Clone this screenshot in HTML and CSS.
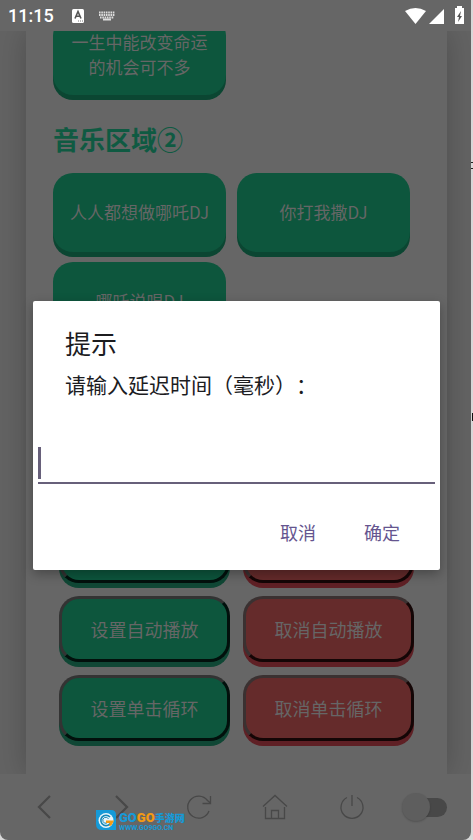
FILE: index.html
```html
<!DOCTYPE html>
<html lang="zh-CN">
<head>
<meta charset="utf-8">
<meta name="viewport" content="width=device-width, initial-scale=1">
<title>提示</title>
<link rel="stylesheet" href="styles.css">
</head>
<body>
<div class="app">
  <header class="status">
    <span class="clock">11:15</span>
    <svg class="ime" width="12" height="14" viewBox="0 0 12 14"><rect width="12" height="14" rx="1.5" fill="#fff"/><path d="M3 9.500 6 2.500 9 9.500M4 7.300h4" fill="none" stroke="#555" stroke-width="1.600"/><path d="M6 12h1m1 0h1m1 0h1" stroke="#777"/></svg>
    <svg class="keys" width="16" height="10" viewBox="0 0 16 10"><path d="M0 1.500h16M0 4h16M1 6.500h14" stroke="#ddd" stroke-width="1.800" stroke-dasharray="1.600 .7" fill="none"/><path d="M4 8.500h8" stroke="#ddd" stroke-width="2"/></svg>
    <svg class="signals" width="60" height="18" viewBox="0 0 60 18" fill="#fff"><path d="M1 4Q11.500-2 22 4L11.500 17z"/><path d="M25 17 40 2v15z"/><path d="M51 1h2V-1h5v2h2v16h-9V2z" /><path d="m57 4-4 6h2l-1 5 4-6h-2z" fill="#555"/></svg>
  </header>

  <main class="page">
    <div class="card">
      <section class="songs songs-first">
        <button class="song">一生中能改变命运的机会可不多</button>
      </section>
      <h2>音乐区域②</h2>
      <section class="songs">
        <button class="song">人人都想做哪吒DJ</button>
        <button class="song">你打我撒DJ</button>
        <button class="song">哪吒说唱DJ</button>
      </section>
      <section class="controls">
        <button class="control"></button>
        <button class="control cancel"></button>
        <button class="control">设置自动播放</button>
        <button class="control cancel">取消自动播放</button>
        <button class="control">设置单击循环</button>
        <button class="control cancel">取消单击循环</button>
      </section>
    </div>
  </main>

  <nav class="toolbar">
    <button aria-label="后退"><svg width="28" height="28" viewBox="0 0 28 28"><path d="M19 3 8 14l11 11" stroke-width="2.200"/></svg></button>
    <button aria-label="前进"><svg width="28" height="28" viewBox="0 0 28 28"><path d="m8 3 11 11L8 25" stroke-width="2.200"/></svg></button>
    <button aria-label="刷新"><svg width="28" height="28" viewBox="0 0 28 28"><path d="M24 18A11 11 0 1 1 22.500 7.500L25.500 10M25.500 3v7.500h-8"/></svg></button>
    <button aria-label="主页"><svg width="28" height="28" viewBox="0 0 28 28"><path d="M2 13.500 14 2.500l12 11M4.500 14v11.500h19V14M10.500 25.500v-8h7v8"/></svg></button>
    <button aria-label="关闭"><svg width="28" height="28" viewBox="0 0 28 28"><path d="M9 4.500A11 11 0 1 0 19 4.500M14 2v11"/></svg></button>
    <span><input class="toggle" type="checkbox" aria-label="开关"></span>
  </nav>

  <div class="overlay">
    <form class="dialog" role="dialog" aria-labelledby="title">
      <h1 id="title">提示</h1>
      <label for="delay">请输入延迟时间（毫秒）：</label>
      <input id="delay" type="text" inputmode="numeric">
      <div class="actions">
        <button type="button">取消</button>
        <button type="button">确定</button>
      </div>
    </form>
  </div>

  <div class="brand">
    <svg width="22" height="21" viewBox="0 0 22 21"><path d="M1 0h15q5 0 5 5v15H7Q1 20 1 14z" fill="#159ad8"/><circle cx="11" cy="10.500" r="7.500" fill="#e8f5fa"/><path d="M15 7A5.200 5.200 0 1 0 16 12h-5" fill="none" stroke="#1688b8" stroke-width="1.600"/><path d="M13.500 9A3 3 0 1 0 12 13" fill="none" stroke="#1688b8"/><path d="M11 10.500h8l-2 4q-1 1.500-3 1.500l1-3h-4z" fill="#f49a12"/></svg>
    <div class="brand-text">
      <div class="brand-name"><b>GO</b><b class="gold">GO</b><span>手游网</span></div>
      <small>WWW.GO9GO.CN</small>
    </div>
  </div>
</div>
</body>
</html>
```
FILE: styles.css
```css
* { box-sizing: border-box; }

body {
  margin: 0;
  background:
    linear-gradient(#222, #222) right 162px / 2px 1px no-repeat,
    linear-gradient(#222, #222) right 168px / 2px 1px no-repeat,
    linear-gradient(#111, #111) right 413px / 1px 8px no-repeat,
    #d8d8d8;
  font-family: "Noto Sans CJK SC", sans-serif;
  text-spacing-trim: space-all;
}

button, input { font: inherit; margin: 0; padding: 0; }

.app {
  position: relative;
  display: flex;
  flex-direction: column;
  height: 100vh;
  margin-right: 2px;
  overflow: hidden;
  border-radius: 0 0 8px 8px;
  background: #666;
}

.status {
  display: flex;
  align-items: center;
  flex: none;
  height: 31px;
  padding: 0 7px 0 8px;
  color: #fff;
}
.clock { font: 500 18px/32px Roboto, sans-serif; }
.ime { margin-left: 18px; }
.keys { margin-left: 15px; }
.signals { margin-left: auto; overflow: visible; }

.page {
  flex: 1;
  min-height: 0;
  overflow: hidden;
  padding: 0 24px 0 26px;
  background: #636363;
}
.card {
  display: flex;
  flex-direction: column;
  height: 100%;
  padding: 0 27px 33px;
  background: #666;
  box-shadow: 0 0 28px rgba(0, 0, 0, .22);
}
.card h2 {
  margin: 24px 0 14px;
  font-size: 26px;
  line-height: 40px;
  color: #0f5a42;
}

.songs {
  display: grid;
  grid-template-columns: repeat(2, 173px);
  gap: 10px 11px;
}
.songs-first { margin-top: -15px; }
.song {
  height: 79px;
  padding: 0 15px 3px;
  border: 0;
  border-radius: 20px;
  background: #0d563d;
  box-shadow: 0 5px #0b4632;
  color: #666;
  font-size: 17px;
  line-height: 25px;
}

.controls {
  display: grid;
  grid-template-columns: repeat(2, 171px);
  justify-content: center;
  gap: 13px;
  margin-top: auto;
}
.control {
  height: 66px;
  border: 3px solid;
  border-color: #333 #02100c #02100c #333;
  border-radius: 20px;
  background: #0d563d;
  box-shadow: 0 5px #104735;
  color: #666;
  font-size: 18px;
}
.cancel {
  border-color: #3a3131 #140606 #140606 #3a3131;
  background: #652b2b;
  box-shadow: 0 5px #5f2025;
}

.toolbar {
  display: grid;
  grid-template-columns: repeat(6, 1fr);
  flex: none;
  height: 66px;
  padding: 0 4px 0 7px;
}
.toolbar > * {
  display: flex;
  align-items: center;
  justify-content: center;
  border: 0;
  background: none;
}
.toolbar svg { fill: none; stroke: #484848; stroke-width: 1.3; }
.toggle {
  appearance: none;
  position: relative;
  width: 36px;
  height: 19px;
  border-radius: 10px;
  background: #484848;
}
.toggle::before {
  content: "";
  position: absolute;
  top: -5px;
  left: -9px;
  width: 28px;
  height: 28px;
  border-radius: 50%;
  background: #5e5e5e;
  box-shadow: 0 1px 2px rgba(0, 0, 0, .2);
}

.overlay {
  position: absolute;
  inset: 31px 31px 0 33px;
  display: flex;
  align-items: center;
}
.dialog {
  flex: 1;
  padding: 23px 5px 20px;
  border-radius: 2px;
  background: #fff;
  box-shadow: 0 4px 12px rgba(0, 0, 0, .3);
  color: #1c1c1f;
}
.dialog h1 {
  margin: 0 27px 7px;
  font-size: 26px;
  font-weight: 400;
  line-height: 38px;
}
.dialog label {
  display: block;
  margin: 0 27px 41px;
  font-size: 21px;
  line-height: 30px;
}
.dialog input {
  display: block;
  width: 100%;
  height: 44px;
  border: 0;
  border-bottom: 2px solid #67607a;
  outline: 0;
  background: linear-gradient(#67607a, #67607a) 0 7px / 3px 32px no-repeat;
  font-size: 21px;
}
.actions {
  display: flex;
  justify-content: flex-end;
  gap: 24px;
  margin: 30px 23px 0 0;
}
.actions button {
  height: 36px;
  padding: 0 12px;
  border: 0;
  background: none;
  color: #65558f;
  font-size: 18px;
}

.brand {
  position: absolute;
  bottom: 9px;
  left: 95px;
  display: flex;
  gap: 2px;
  color: #159ad8;
}
.brand-text { display: flex; flex-direction: column; }
.brand-name { display: flex; align-items: center; height: 16px; }
.brand-name b { font: 900 13px/16px Roboto, sans-serif; }
.brand-name .gold { color: #f49a12; }
.brand-name span { font-size: 10px; font-weight: 900; line-height: 16px; }
.brand small { font: 700 7px/5px Roboto, sans-serif; }
```
